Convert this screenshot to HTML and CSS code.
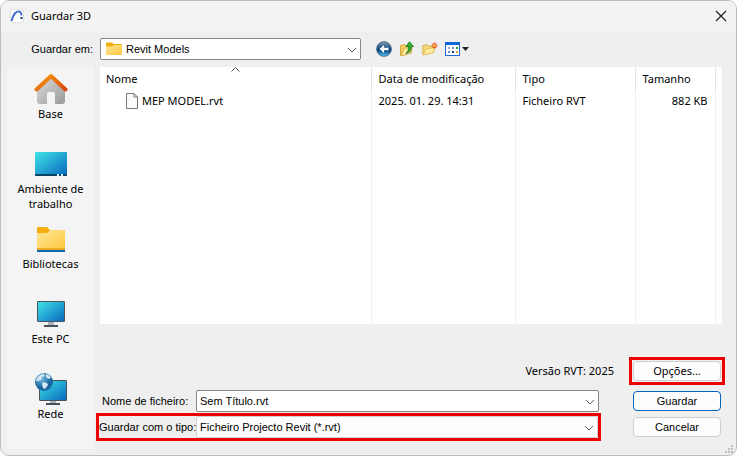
FILE: index.html
```html
<!DOCTYPE html>
<html lang="pt">
<head>
<meta charset="utf-8">
<title>Guardar 3D</title>
<link rel="stylesheet" href="styles.css">
</head>
<body>
<main class="dialog">
  <header class="titlebar">
    <svg class="app-icon" viewBox="0 0 14 14" aria-hidden="true"><rect x=".5" y=".5" width="13" height="13" rx="2" fill="#fff" stroke="#ddd"/><path d="M1.500 12C3 6 6 2.300 8.500 2.300c2 0 2.800 1.700 3 4.200" fill="none" stroke="#3b69cf" stroke-width="1.800"/><rect x="10.500" y="8" width="2" height="2" fill="#16337d"/></svg>
    <h1>Guardar 3D</h1>
    <button class="close" aria-label="Fechar"><svg width="12" height="12" viewBox="0 0 12 12"><path d="M1 1l10 10M11 1L1 11" stroke="#222" stroke-width="1.200"/></svg></button>
  </header>

  <div class="toolbar">
    <label class="gdi" for="folder">Guardar em:</label>
    <div class="combo folder-combo">
      <svg class="combo-icon" width="16" height="14" viewBox="0 0 16 14" aria-hidden="true"><defs><linearGradient id="fold" x2="1" y2="1"><stop stop-color="#ffe59a"/><stop offset="1" stop-color="#ffc83d"/></linearGradient></defs><path d="M0 1.500Q0 .5 1 .5h5l2 1.500h7q1 0 1 1V7H0z" fill="#f2ad0c"/><path d="M0 4.500h6L8 3h8v9q0 1-1 1H1q-1 0-1-1z" fill="url(#fold)"/></svg>
      <select id="folder" class="gdi"><option>Revit Models</option></select>
      <svg class="chevron" viewBox="0 0 10 6" aria-hidden="true"><path d="M1 1l4 4 4-4"/></svg>
    </div>
    <div class="tools">
      <button aria-label="Retroceder"><svg width="16" height="16" viewBox="0 0 16 16"><defs><linearGradient id="ball" x2="0" y2="1"><stop stop-color="#8d9cab"/><stop offset=".45" stop-color="#174f87"/><stop offset=".6" stop-color="#0c4680"/><stop offset="1" stop-color="#56d2fa"/></linearGradient></defs><circle cx="8" cy="8" r="7.400" fill="url(#ball)" stroke="#3d5e7d" stroke-width=".8"/><path d="M3.500 8L8 4v2.700h4.500v2.600H8V12z" fill="#fff"/></svg></button>
      <button aria-label="Subir um nível"><svg width="16" height="16" viewBox="0 0 16 16"><path d="M1.500 14.500v-10l4-1 1 1.500h6v7z" fill="#f3cf5c" stroke="#c99d2e" stroke-width=".8"/><path d="M2 15l3-7.500 8-1.500-1 6z" fill="#ffeb9d" stroke="#d0a638" stroke-width=".8"/><path d="M7 12.500Q10 10.500 9.500 5.500H7L10.500.8l4 4.700h-2.200Q12.500 11 7 12.500z" fill="#2eb42e" stroke="#126f1b" stroke-width=".8"/></svg></button>
      <button aria-label="Criar nova pasta"><svg width="16" height="16" viewBox="0 0 16 16"><path d="M.8 13.500v-9l4-1L6 5h6v6z" fill="#f7d876" stroke="#d4a842" stroke-width=".8"/><path d="M1 14l3-6 9-1.500-2 5.500z" fill="#ffeba4" stroke="#dfb54c" stroke-width=".8"/><path d="M12.500 1.500v6M9.500 4.500h6M10.500 2.500l4 4M14.500 2.500l-4 4" stroke="#ec5a24" stroke-width="1.200"/><circle cx="12.500" cy="4.500" r="1.300" fill="#ffcb60"/></svg></button>
      <button aria-label="Menu Ver"><svg width="25" height="14" viewBox="0 0 25 14"><rect x=".5" y=".5" width="14" height="13" fill="#fff" stroke="#2069cf"/><path d="M0 0h15v3H0z" fill="#0f67dc"/><path d="M3 5h2v2H3z" fill="#a5a5c0"/><path d="M7 5h2v2H7zM3 9h2v2H3z" fill="#6b91d8"/><path d="M11 5h2v2h-2z" fill="#1b9b38"/><path d="M7 9h2v2H7z" fill="#15338b"/><path d="M11 9h2v2h-2z" fill="#d6a52b"/><path d="M17 5h7l-3.500 4z" fill="#222"/></svg></button>
    </div>
  </div>

  <div class="workspace">
    <nav class="places">
      <a href="#"><svg width="34" height="32" viewBox="0 0 34 32" aria-hidden="true"><defs><linearGradient id="wall" x2="1" y2="1"><stop stop-color="#dedede"/><stop offset="1" stop-color="#999"/></linearGradient><linearGradient id="roof" x2="1" y2="1"><stop stop-color="#f7a00d"/><stop offset="1" stop-color="#dc4410"/></linearGradient></defs><path d="M3 15L17 3l14 12v13q0 3-3 3h-7V21q0-2-2-2h-4q-2 0-2 2v10H6q-3 0-3-3z" fill="url(#wall)"/><path d="M2.500 16.500L17 3l14.500 13.500" fill="none" stroke="url(#roof)" stroke-width="4" stroke-linecap="round" stroke-linejoin="round"/></svg><span>Base</span></a>
      <a href="#"><svg width="32" height="32" viewBox="0 0 32 32" aria-hidden="true"><defs><linearGradient id="screen" x2="1" y2="1"><stop stop-color="#40e4e8"/><stop offset="1" stop-color="#0767bd"/></linearGradient></defs><rect y="4" width="32" height="24" rx="1" fill="url(#screen)"/><path d="M0 26h32v1q0 1-1 1H1q-1 0-1-1z" fill="#064463"/><path d="M22 26h2v2h-2zM26 26h2v2h-2z" fill="#def"/></svg><span>Ambiente de trabalho</span></a>
      <a href="#"><svg width="32" height="32" viewBox="0 0 32 32" aria-hidden="true"><path d="M2 5q0-1 1-1h9l3 3h14q1 0 1 1v8H2z" fill="#f5ae0e"/><path d="M2 10h10l3-3h14q1 0 1 1v18H2z" fill="url(#fold)"/><path d="M2 25h28v2H2z" fill="#e9a81e"/><path d="M2 27h28v2H2z" fill="#0c6ab5"/></svg><span>Bibliotecas</span></a>
      <a href="#"><svg width="32" height="32" viewBox="0 0 32 32" aria-hidden="true"><path d="M13 23h6v5h-6z" fill="#a5b4bd"/><path d="M9 27h14v2H9z" fill="#465059"/><rect x="2.500" y="3.500" width="27" height="20" rx=".5" fill="url(#screen)" stroke="#4a535c"/></svg><span>Este PC</span></a>
      <a href="#"><svg width="32" height="32" viewBox="0 0 32 32" aria-hidden="true"><defs><radialGradient id="globe" cx=".35" cy=".3"><stop stop-color="#7cc0e8"/><stop offset="1" stop-color="#1b669f"/></radialGradient></defs><path d="M15 27h6v4h-6z" fill="#a5b4bd"/><path d="M11 30h14v2H11z" fill="#465059"/><rect x="4.500" y="7.500" width="27" height="20" rx=".5" fill="url(#screen)" stroke="#4a535c"/><circle cx="9" cy="9" r="9" fill="url(#globe)"/><path d="M2 5q3-4 7-4l1 2-3 1-1 3-3 1-2 0zM11 1q4 1 5 4l-3 1-2-2zM8 9l4 1 1 2-3 4-2-1-1-4z" fill="#d3e6f1"/></svg><span>Rede</span></a>
    </nav>

    <section class="content">
      <div class="list">
        <table>
          <colgroup><col><col class="c-date"><col class="c-type"><col class="c-size"><col class="c-end"></colgroup>
          <thead><tr><th>Nome<svg class="sort" width="9" height="5" viewBox="0 0 9 5" aria-hidden="true"><path d="M.5 4.500l4-4 4 4" fill="none" stroke="#555"/></svg></th><th>Data de modificação</th><th>Tipo</th><th>Tamanho</th><th></th></tr></thead>
          <tbody>
            <tr><td><span class="file"><svg width="12" height="16" viewBox="0 0 12 16" aria-hidden="true"><path d="M.5.5h7.500l3.500 3.500v11.500H.5z" fill="#fafafa" stroke="#777"/><path d="M8 .5v3.500h3.500" fill="none" stroke="#777"/></svg>MEP MODEL.rvt</span></td><td>2025. 01. 29. 14:31</td><td>Ficheiro RVT</td><td class="num">882 KB</td><td></td></tr>
            <tr class="filler"><td></td><td></td><td></td><td></td><td></td></tr>
          </tbody>
        </table>
      </div>

      <form class="form">
        <span class="version">Versão RVT: 2025</span>
        <span class="marked-button"><button type="button">Opções...</button></span>

        <label class="gdi name-label" for="name">Nome de ficheiro:</label>
        <div class="combo name-combo">
          <input id="name" class="gdi" type="text" value="Sem Título.rvt">
          <svg class="chevron" viewBox="0 0 10 6" aria-hidden="true"><path d="M1 1l4 4 4-4"/></svg>
        </div>
        <button type="button" class="primary gdi">Guardar</button>

        <div class="marked-row">
          <label class="gdi" for="type">Guardar com o tipo:</label>
          <div class="combo">
            <select id="type" class="gdi"><option>Ficheiro Projecto Revit (*.rvt)</option></select>
            <svg class="chevron" viewBox="0 0 10 6" aria-hidden="true"><path d="M1 1l4 4 4-4"/></svg>
          </div>
        </div>
        <button type="button" class="gdi">Cancelar</button>
      </form>
    </section>
  </div>
  <svg class="grip" width="8" height="8" viewBox="0 0 8 8" aria-hidden="true"><path d="M6 0h2v2H6zM3 3h2v2H3zM6 3h2v2H6zM0 6h2v2H0zM3 6h2v2H3zM6 6h2v2H6z" fill="#bdbdbd"/></svg>
</main>
</body>
</html>
```
FILE: styles.css
```css
* { box-sizing: border-box; }

body {
  margin: 0;
  background: #fff;
  color: #000;
  font: 11px/16px "Noto Sans", "Open Sans", sans-serif;
}

button, input, select { font: inherit; color: inherit; margin: 0; }

.gdi { font-family: "Liberation Sans", Arial, sans-serif; }

.dialog {
  position: relative;
  display: flex;
  flex-direction: column;
  min-height: 100vh;
  overflow: hidden;
  background: #efefef;
  border: 1px solid #bdbdbd;
  border-radius: 9px;
}

.titlebar {
  display: flex;
  align-items: center;
  gap: 7px;
  height: 30px;
  padding: 0 9px;
  background: #f3f3f3;
}
.app-icon { width: 14px; height: 14px; }
.titlebar h1 { flex: 1; margin: 0; font-size: 11px; font-weight: 400; }
.close { display: flex; padding: 0; border: 0; background: none; }

.toolbar {
  display: grid;
  grid-template-columns: 92px minmax(160px, 268fr) minmax(110px, 375fr);
  align-items: center;
  height: 36px;
}
.toolbar > label { text-align: right; }
.toolbar .combo { margin-left: 7px; }
.toolbar .tools { padding-left: 15px; }

.tools { display: flex; align-items: center; gap: 7px; }
.tools button { display: flex; padding: 0; border: 0; background: none; }

.combo { position: relative; height: 22px; }
.combo select,
.combo input {
  display: block;
  width: 100%;
  height: 100%;
  padding: 0 20px 0 3px;
  appearance: none;
  border: 1px solid #868686;
  border-radius: 2px;
  background: #fff;
}
.combo .combo-icon { position: absolute; left: 6px; top: 4px; }
.folder-combo select { padding-left: 25px; }
.chevron {
  position: absolute;
  right: 4px;
  top: 50%;
  width: 10px;
  height: 6px;
  margin-top: -2px;
  fill: none;
  stroke: #606060;
  pointer-events: none;
}

.workspace {
  flex: 1;
  display: flex;
  gap: 6px;
  padding: 0 14px 6px 6px;
}

.places {
  display: flex;
  flex-direction: column;
  flex: 0 0 87px;
  padding-top: 6px;
  background: #f4f4f4;
}
.places a {
  display: flex;
  flex-direction: column;
  align-items: center;
  gap: 1px;
  min-height: 75px;
  padding: 0 5px;
  color: #000;
  text-align: center;
  text-decoration: none;
  line-height: 15px;
}

.content { flex: 1; display: flex; flex-direction: column; min-width: 0; }

.list { display: flex; min-height: 257px; background: #fff; }
table { width: 100%; border-collapse: collapse; table-layout: fixed; }
.c-date { width: 144px; }
.c-type { width: 120px; }
.c-size { width: 80px; }
.c-end { width: 7px; }
th, td {
  padding: 0 7px;
  border-left: 1px solid #edf2f8;
  font-weight: 400;
  text-align: left;
  white-space: nowrap;
}
th { position: relative; height: 24px; border-color: #e2e2e2; }
td { height: 20px; }
th:first-child, td:first-child { padding-left: 6px; border-left: 0; }
th:last-child, td:last-child { padding: 0; }
.num { text-align: right; }
.sort { position: absolute; left: 50%; top: 0; margin-left: -4px; }
.file { display: flex; align-items: center; gap: 4px; padding-left: 20px; }
.filler td { height: 213px; }

.form {
  display: grid;
  grid-template-columns: 96px 1fr 88px;
  grid-template-rows: 26px 22px 22px;
  row-gap: 4px;
  align-items: center;
  padding: 36px 1px 0 0;
}
.version {
  grid-column: 1 / 3;
  align-self: start;
  justify-self: end;
  margin-right: 19px;
  line-height: 22px;
}
.marked-button { align-self: start; margin-top: 1px; }
.name-label { padding-left: 2px; white-space: nowrap; }
.name-combo { margin-right: 34px; }

.form button {
  display: block;
  width: 88px;
  height: 20px;
  padding: 0;
  border: 1px solid #d0d0d0;
  border-radius: 4px;
  background: #fdfdfd;
  line-height: 16px;
}
.form .primary { border-color: #0067c0; }
.marked-button { outline: 3px solid #ec0000; outline-offset: 1px; }

.marked-row {
  grid-column: 1 / 3;
  display: grid;
  grid-template-columns: 97px 1fr;
  align-items: center;
  height: 28px;
  margin: -3px 32px -3px -4px;
  border: 3px solid #ec0000;
}
.marked-row label { white-space: nowrap; }
.marked-row select { border-color: #cfcfcf; background: #fdfdfd; }

.grip { position: absolute; right: 3px; bottom: 2px; }
```
